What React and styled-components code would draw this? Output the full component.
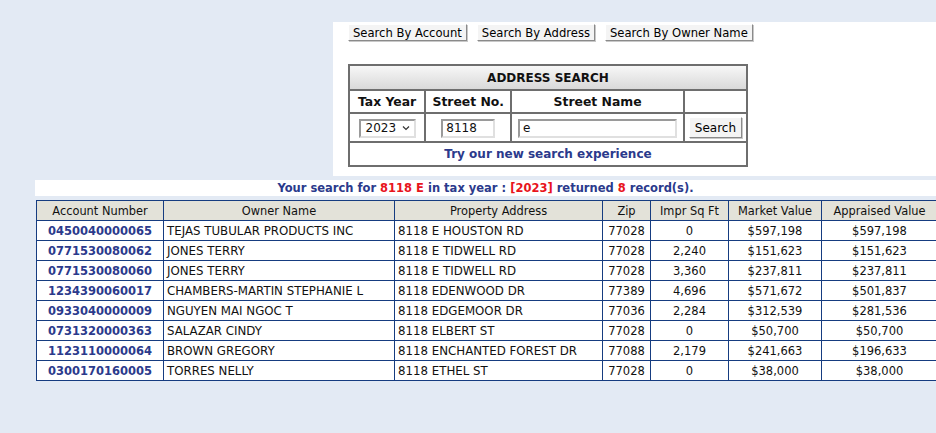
import styled, { createGlobalStyle } from 'styled-components'

const GlobalStyle = createGlobalStyle`
  html, body {
    margin: 0;
    padding: 0;
    background: #e3eaf4;
    overflow: hidden;
    font-family: 'DejaVu Sans', Verdana, sans-serif;
  }
`

const Page = styled.div`
  width: 936px;
  height: 433px;
  padding-top: 22px;
  box-sizing: border-box;
`

const SearchPanel = styled.div`
  margin-left: 333px;
  height: 154px;
  background: #fff;
  padding: 2px 0 0 15px;
  box-sizing: border-box;
`

const TabRow = styled.div`
  display: flex;
  gap: 10px;
`

const TabButton = styled.button`
  height: 17px;
  padding: 0 4px;
  font-family: 'DejaVu Sans', Verdana, sans-serif;
  font-size: 11.6px;
  color: #000;
  background: #f4f4f4;
  border: 1px solid;
  border-color: #fff #8a8a8a #8a8a8a #fff;
  box-shadow: 1px 1px 0 #c8c8c8;
  line-height: 14px;
  cursor: pointer;
`

const SearchTable = styled.table`
  margin-top: 23px;
  width: 400px;
  border-collapse: separate;
  border-spacing: 0;
  border: 1px solid #6e6e6e;
  font-family: 'DejaVu Sans', Verdana, sans-serif;
`

const Caption = styled.th`
  height: 23px;
  padding: 0;
  border: 1px solid #6e6e6e;
  background: linear-gradient(#f7f7f7, #d9d9d9);
  font-size: 12px;
  font-weight: bold;
  color: #111;
`

const ColHead = styled.th`
  width: ${(p) => p.$w}px;
  height: 21px;
  padding: 0;
  border: 1px solid #6e6e6e;
  font-size: 12.4px;
  font-weight: bold;
  color: #111;
`

const InputCell = styled.td`
  height: 27px;
  padding: 0;
  border: 1px solid #6e6e6e;
  text-align: center;
  vertical-align: middle;
`

const FakeSelect = styled.div`
  display: inline-flex;
  align-items: center;
  justify-content: space-between;
  box-sizing: border-box;
  width: 57px;
  height: 19px;
  padding: 0 4px 0 5px;
  border: 2px solid;
  border-color: #9a9a9a #e0e0e0 #e0e0e0 #9a9a9a;
  background: #fff;
  font-size: 12px;
  color: #111;
`

const TextBox = styled.input`
  box-sizing: border-box;
  width: ${(p) => p.$w}px;
  height: 19px;
  padding: 0 3px;
  border: 2px solid;
  border-color: #9a9a9a #e0e0e0 #e0e0e0 #9a9a9a;
  font-family: 'DejaVu Sans', Verdana, sans-serif;
  font-size: 12px;
  color: #111;
  outline: none;
`

const GoButton = styled(TabButton)`
  height: 21px;
  padding: 0 5px;
  font-size: 12px;
`

const LinkCell = styled.td`
  height: 22px;
  padding: 0;
  border: 1px solid #6e6e6e;
  text-align: center;
  font-size: 12px;
  font-weight: bold;
  color: #2b3a8c;
`

const MessageBar = styled.div`
  margin: 4px 0 0 35px;
  height: 16px;
  background: #fff;
  text-align: center;
  font-size: 11.5px;
  font-weight: bold;
  line-height: 16px;
  color: #2b3a8c;
`

const Hot = styled.span`
  color: #e8141c;
`

const Results = styled.table`
  margin: 4px 0 0 36px;
  width: 901px;
  border-collapse: collapse;
  table-layout: fixed;
  background: #fff;
  font-family: 'DejaVu Sans', Verdana, sans-serif;
  color: #111;
`

const Th = styled.th`
  height: 19px;
  padding: 0;
  border: 1px solid #163c80;
  background: #e3e2d9;
  font-size: 11.4px;
  font-weight: normal;
  text-align: center;
`

const Td = styled.td`
  height: 19px;
  padding: 0 0 0 ${(p) => (p.$left ? '3px' : '0')};
  border: 1px solid #163c80;
  font-size: ${(p) => (p.$left ? '11.8px' : '11.5px')};
  text-align: ${(p) => (p.$left ? 'left' : 'center')};
  white-space: nowrap;
  overflow: hidden;
`

const Account = styled(Td)`
  font-weight: bold;
  font-size: 11.5px;
  color: #2b3a8c;
`

const Chevron = () => (
  <svg width="8" height="6" viewBox="0 0 8 6">
    <path d="M1 1.5 L4 4.5 L7 1.5" fill="none" stroke="#333" strokeWidth="1.2" />
  </svg>
)

const columns = [
  ['Account Number', 127],
  ['Owner Name', 231],
  ['Property Address', 208],
  ['Zip', 48],
  ['Impr Sq Ft', 78],
  ['Market Value', 93],
  ['Appraised Value', 116],
]

const rows = [
  ['0450040000065', 'TEJAS TUBULAR PRODUCTS INC', '8118 E HOUSTON RD', '77028', '0', '$597,198', '$597,198'],
  ['0771530080062', 'JONES TERRY', '8118 E TIDWELL RD', '77028', '2,240', '$151,623', '$151,623'],
  ['0771530080060', 'JONES TERRY', '8118 E TIDWELL RD', '77028', '3,360', '$237,811', '$237,811'],
  ['1234390060017', 'CHAMBERS-MARTIN STEPHANIE L', '8118 EDENWOOD DR', '77389', '4,696', '$571,672', '$501,837'],
  ['0933040000009', 'NGUYEN MAI NGOC T', '8118 EDGEMOOR DR', '77036', '2,284', '$312,539', '$281,536'],
  ['0731320000363', 'SALAZAR CINDY', '8118 ELBERT ST', '77028', '0', '$50,700', '$50,700'],
  ['1123110000064', 'BROWN GREGORY', '8118 ENCHANTED FOREST DR', '77088', '2,179', '$241,663', '$196,633'],
  ['0300170160005', 'TORRES NELLY', '8118 ETHEL ST', '77028', '0', '$38,000', '$38,000'],
]

const App = () => {
  return (
    <Page>
      <GlobalStyle />
      <SearchPanel>
        <TabRow>
          <TabButton>Search By Account</TabButton>
          <TabButton>Search By Address</TabButton>
          <TabButton>Search By Owner Name</TabButton>
        </TabRow>
        <SearchTable>
          <tbody>
            <tr>
              <Caption colSpan={4}>ADDRESS SEARCH</Caption>
            </tr>
            <tr>
              <ColHead $w={74}>Tax Year</ColHead>
              <ColHead $w={84}>Street No.</ColHead>
              <ColHead $w={170}>Street Name</ColHead>
              <ColHead $w={61}></ColHead>
            </tr>
            <tr>
              <InputCell>
                <FakeSelect>
                  2023 <Chevron />
                </FakeSelect>
              </InputCell>
              <InputCell>
                <TextBox $w={54} defaultValue="8118" />
              </InputCell>
              <InputCell>
                <TextBox $w={159} defaultValue="e" />
              </InputCell>
              <InputCell>
                <GoButton>Search</GoButton>
              </InputCell>
            </tr>
            <tr>
              <LinkCell colSpan={4}>Try our new search experience</LinkCell>
            </tr>
          </tbody>
        </SearchTable>
      </SearchPanel>
      <MessageBar>
        Your search for <Hot>8118 E</Hot> in tax year : <Hot>[2023]</Hot> returned{' '}
        <Hot>8</Hot> record(s).
      </MessageBar>
      <Results>
        <colgroup>
          {columns.map(([name, w]) => (
            <col key={name} style={{ width: w }} />
          ))}
        </colgroup>
        <thead>
          <tr>
            {columns.map(([name]) => (
              <Th key={name}>{name}</Th>
            ))}
          </tr>
        </thead>
        <tbody>
          {rows.map((r) => (
            <tr key={r[0]}>
              <Account>{r[0]}</Account>
              <Td $left>{r[1]}</Td>
              <Td $left>{r[2]}</Td>
              <Td>{r[3]}</Td>
              <Td>{r[4]}</Td>
              <Td>{r[5]}</Td>
              <Td>{r[6]}</Td>
            </tr>
          ))}
        </tbody>
      </Results>
    </Page>
  )
}

export default App
